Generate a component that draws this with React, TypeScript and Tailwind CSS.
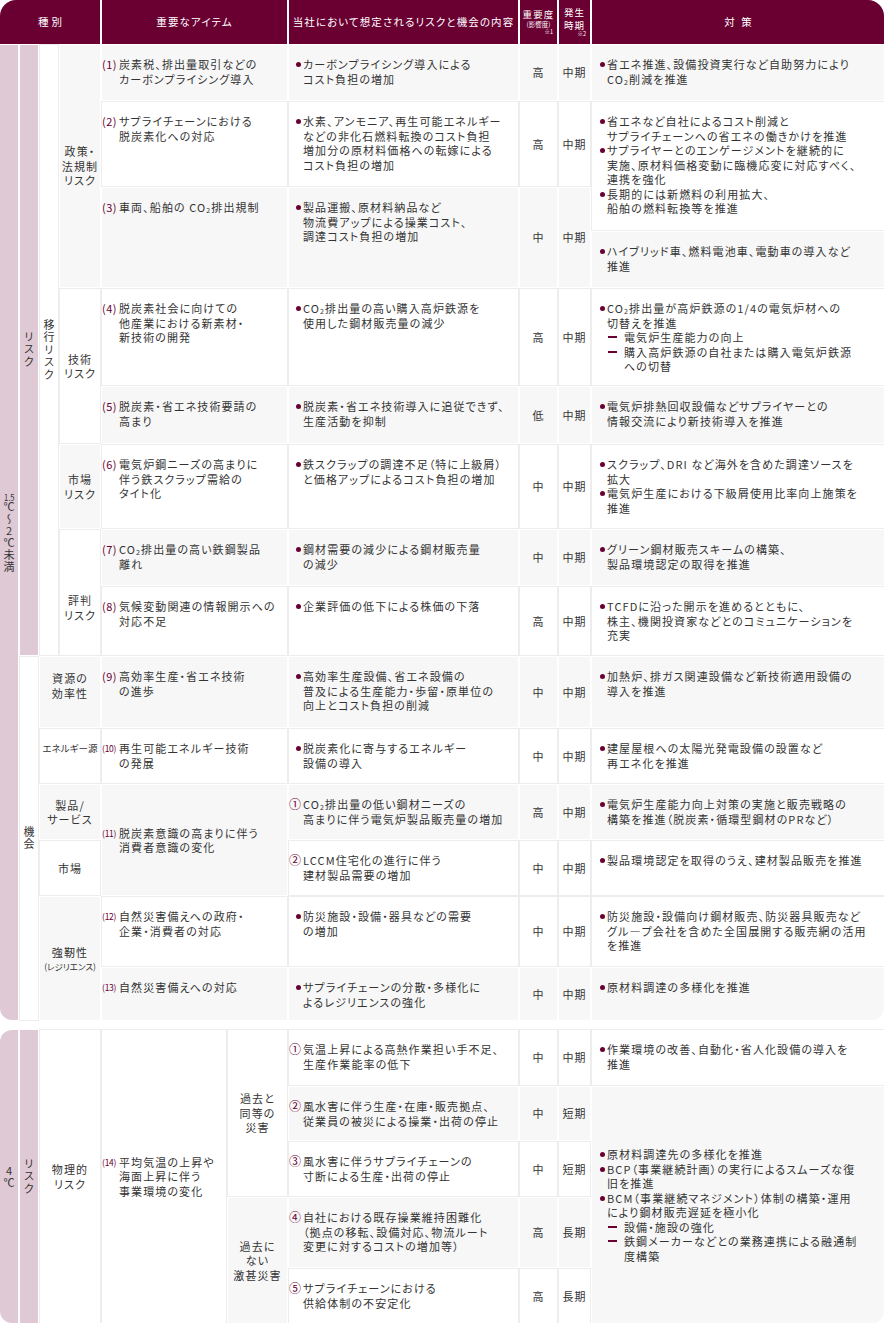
import React from 'react';
import clsx from 'clsx';

type Tone = 'gray' | 'white' | 'pink';

// grid placement classes, written out so Tailwind can see them
const CS = ['', 'col-start-1', 'col-start-2', 'col-start-3', 'col-start-4', 'col-start-5', 'col-start-6', 'col-start-7', 'col-start-8', 'col-start-9'];
const CE = ['', 'col-end-1', 'col-end-2', 'col-end-3', 'col-end-4', 'col-end-5', 'col-end-6', 'col-end-7', 'col-end-8', 'col-end-9', 'col-end-10'];
const RS = ['', 'row-start-1', 'row-start-2', 'row-start-3', 'row-start-4', 'row-start-5', 'row-start-6', 'row-start-7', 'row-start-8', 'row-start-9', 'row-start-10', 'row-start-11', 'row-start-12', 'row-start-13', 'row-start-14', 'row-start-15'];
const RE = ['', 'row-end-1', 'row-end-2', 'row-end-3', 'row-end-4', 'row-end-5', 'row-end-6', 'row-end-7', 'row-end-8', 'row-end-9', 'row-end-10', 'row-end-11', 'row-end-12', 'row-end-13', 'row-end-14', 'row-end-15', 'row-end-16'];

const TONE: Record<Tone, string> = {
  gray: 'bg-[#f7f7f7]',
  white: 'bg-white shadow-[0_0_0_1px_#ededed]',
  pink: 'bg-[#dfc9d4]',
};

interface CellProps {
  c: number;
  cs?: number;
  r: number;
  rs?: number;
  tone: Tone;
  mid?: boolean;
  center?: boolean;
  className?: string;
  children?: React.ReactNode;
}

function Cell({ c, cs = 1, r, rs = 1, tone, mid, center, className, children }: CellProps) {
  return (
    <div
      className={clsx(
        'flex flex-col',
        CS[c],
        CE[c + cs],
        RS[r],
        RE[r + rs],
        TONE[tone],
        mid ? 'justify-center' : 'pt-[12px]',
        center && 'items-center text-center',
        className
      )}
    >
      {children}
    </div>
  );
}

const L = ({ children }: { children: React.ReactNode }) => (
  <span className="block whitespace-nowrap">{children}</span>
);

const CO2 = () => (
  <>
    CO<span className="align-[-1px] text-[7px] leading-none">2</span>
  </>
);

function Item({ n, children }: { n: number; children: React.ReactNode }) {
  return (
    <div className="flex">
      {n >= 10 ? (
        <span className="w-[17px] shrink-0 pt-[1px] text-[8.5px] leading-[13px] tracking-[-0.03em] text-[#6a0032]">({n})</span>
      ) : (
        <span className="w-[17px] shrink-0 tracking-[0.04em] text-[#6a0032]">({n})</span>
      )}
      <div>{children}</div>
    </div>
  );
}

function Dot({ children }: { children: React.ReactNode }) {
  return (
    <div className="flex">
      <span className="mr-[2px] mt-[5px] h-[5px] w-[5px] shrink-0 rounded-full bg-[#6a0032]" />
      <div>{children}</div>
    </div>
  );
}

function Dash({ children }: { children: React.ReactNode }) {
  return (
    <div className="flex">
      <span className="ml-[1px] mr-[7px] mt-[6px] h-[2px] w-[9px] shrink-0 bg-[#6a0032]" />
      <div>{children}</div>
    </div>
  );
}

const CIRC = ['', '①', '②', '③', '④', '⑤'];

function Circ({ n, children }: { n: number; children: React.ReactNode }) {
  return (
    <div className="flex">
      <span className="w-[14px] shrink-0 text-[12px] tracking-normal text-[#6a0032]">{CIRC[n]}</span>
      <div>{children}</div>
    </div>
  );
}

// stacked vertical label, one text run set in vertical writing mode
function Vert({ text }: { text: string }) {
  return (
    <div className="leading-[18px] tracking-[1.5px] [font-feature-settings:normal] [text-orientation:upright] [writing-mode:vertical-rl]">
      {text}
    </div>
  );
}

interface Row {
  r: number;
  rs?: number;
  tone: Tone;
  circ?: boolean;
  body: React.ReactNode;
  imp: string;
  term: string;
}

const rows1: Row[] = [
  { r: 1, tone: 'gray', imp: '高', term: '中期', body: <Dot><L>カーボンプライシング導入による</L><L>コスト負担の増加</L></Dot> },
  { r: 2, tone: 'white', imp: '高', term: '中期', body: <Dot><L>水素、アンモニア、再生可能エネルギー</L><L>などの非化石燃料転換のコスト負担</L><L>増加分の原材料価格への転嫁による</L><L>コスト負担の増加</L></Dot> },
  { r: 3, rs: 2, tone: 'gray', imp: '中', term: '中期', body: <Dot><L>製品運搬、原材料納品など</L><L>物流費アップによる操業コスト、</L><L>調達コスト負担の増加</L></Dot> },
  { r: 5, tone: 'white', imp: '高', term: '中期', body: <Dot><L><CO2 />排出量の高い購入高炉鉄源を</L><L>使用した鋼材販売量の減少</L></Dot> },
  { r: 6, tone: 'gray', imp: '低', term: '中期', body: <Dot><L>脱炭素・省エネ技術導入に追従できず、</L><L>生産活動を抑制</L></Dot> },
  { r: 7, tone: 'white', imp: '中', term: '中期', body: <Dot><L>鉄スクラップの調達不足（特に上級屑）</L><L>と価格アップによるコスト負担の増加</L></Dot> },
  { r: 8, tone: 'gray', imp: '中', term: '中期', body: <Dot><L>鋼材需要の減少による鋼材販売量</L><L>の減少</L></Dot> },
  { r: 9, tone: 'white', imp: '高', term: '中期', body: <Dot><L>企業評価の低下による株価の下落</L></Dot> },
  { r: 10, tone: 'gray', imp: '中', term: '中期', body: <Dot><L>高効率生産設備、省エネ設備の</L><L>普及による生産能力・歩留・原単位の</L><L>向上とコスト負担の削減</L></Dot> },
  { r: 11, tone: 'white', imp: '中', term: '中期', body: <Dot><L>脱炭素化に寄与するエネルギー</L><L>設備の導入</L></Dot> },
  { r: 12, tone: 'gray', circ: true, imp: '高', term: '中期', body: <Circ n={1}><L><CO2 />排出量の低い鋼材ニーズの</L><L>高まりに伴う電気炉製品販売量の増加</L></Circ> },
  { r: 13, tone: 'white', circ: true, imp: '中', term: '中期', body: <Circ n={2}><L>LCCM住宅化の進行に伴う</L><L>建材製品需要の増加</L></Circ> },
  { r: 14, tone: 'white', imp: '中', term: '中期', body: <Dot><L>防災施設・設備・器具などの需要</L><L>の増加</L></Dot> },
  { r: 15, tone: 'gray', imp: '中', term: '中期', body: <Dot><L>サプライチェーンの分散・多様化に</L><L>よるレジリエンスの強化</L></Dot> },
];

const rows2: Row[] = [
  { r: 1, tone: 'white', circ: true, imp: '中', term: '中期', body: <Circ n={1}><L>気温上昇による高熱作業担い手不足、</L><L>生産作業能率の低下</L></Circ> },
  { r: 2, tone: 'gray', circ: true, imp: '中', term: '短期', body: <Circ n={2}><L>風水害に伴う生産・在庫・販売拠点、</L><L>従業員の被災による操業・出荷の停止</L></Circ> },
  { r: 3, tone: 'white', circ: true, imp: '中', term: '短期', body: <Circ n={3}><L>風水害に伴うサプライチェーンの</L><L>寸断による生産・出荷の停止</L></Circ> },
  { r: 4, tone: 'gray', circ: true, imp: '高', term: '長期', body: <Circ n={4}><L>自社における既存操業維持困難化</L><L>（拠点の移転、設備対応、物流ルート</L><L>変更に対するコストの増加等）</L></Circ> },
  { r: 5, tone: 'white', circ: true, imp: '高', term: '長期', body: <Circ n={5}><L>サプライチェーンにおける</L><L>供給体制の不安定化</L></Circ> },
];

function RowCells({ row }: { row: Row }) {
  const rs = row.rs ?? 1;
  return (
    <>
      <Cell c={6} r={row.r} rs={rs} tone={row.tone} className={row.circ ? 'pl-0' : 'pl-[7px]'}>
        {row.body}
      </Cell>
      <Cell c={7} r={row.r} rs={rs} tone={row.tone} mid center>
        {row.imp}
      </Cell>
      <Cell c={8} r={row.r} rs={rs} tone={row.tone} mid center>
        {row.term}
      </Cell>
    </>
  );
}

function Header() {
  return (
    <div className="grid h-[44px] grid-cols-[100px_185px_229px_37px_31px_1fr] gap-x-[2px] text-[10.5px] text-white">
      <div className="flex items-center justify-center rounded-tl-[16px] bg-[#6a0032] pl-[0.3em] tracking-[0.3em]">種別</div>
      <div className="flex items-center justify-center bg-[#6a0032]">重要なアイテム</div>
      <div className="flex items-center justify-center bg-[#6a0032]">当社において想定されるリスクと機会の内容</div>
      <div className="flex flex-col items-stretch justify-center bg-[#6a0032] text-center tracking-normal">
        <span className="block text-[9.5px] leading-[12px] tracking-[0.12em]">重要度</span>
        <span className="block text-[6.5px] leading-[8.5px] [font-feature-settings:normal]">(影響度)</span>
        <span className="block pr-[4px] text-right text-[5.5px] leading-[7px]">※1</span>
      </div>
      <div className="flex flex-col items-stretch justify-center bg-[#6a0032] text-center tracking-[0.1em]">
        <span className="block text-[9.5px] leading-[12.5px]">発生</span>
        <span className="block text-[9.5px] leading-[12.5px]">時期</span>
        <span className="block pr-[4px] text-right text-[5.5px] leading-[7px] tracking-normal">※2</span>
      </div>
      <div className="flex items-center justify-center rounded-tr-[16px] bg-[#6a0032] pl-[0.6em] tracking-[0.6em]">対策</div>
    </div>
  );
}

function Section1() {
  return (
    <div className="mt-px flex">
      <div className="flex w-[18px] shrink-0 flex-col items-center justify-center rounded-bl-[12px] bg-[#dfc9d4]">
        <div className="leading-[18px] tracking-[1px] [font-feature-settings:normal] [text-orientation:upright] [writing-mode:vertical-rl]">
          <span className="text-[9.5px] tracking-normal [text-combine-upright:all]">1.5</span>℃〜2℃未満
        </div>
      </div>
      <div className="ml-[2px] grid flex-1 grid-cols-[18px_18px_40px_124px_59px_229px_37px_31px_1fr] grid-rows-[55px_84px_42px_55px_96px_56px_83px_55px_68px_70px_54px_54px_54px_69px_52px] gap-[2px]">
        {/* left labels */}
        <Cell c={1} r={1} rs={9} tone="pink" mid center><Vert text="リスク" /></Cell>
        <Cell c={1} r={10} rs={6} tone="white" mid center><Vert text="機会" /></Cell>
        <Cell c={2} r={1} rs={9} tone="white" mid center><Vert text="移行リスク" /></Cell>
        <Cell c={3} r={1} rs={4} tone="gray" mid center><L>政策・</L><L>法規制</L><L>リスク</L></Cell>
        <Cell c={3} r={5} rs={2} tone="white" mid center><L>技術</L><L>リスク</L></Cell>
        <Cell c={3} r={7} tone="gray" mid center><L>市場</L><L>リスク</L></Cell>
        <Cell c={3} r={8} rs={2} tone="white" mid center className="pt-[30px]"><L>評判</L><L>リスク</L></Cell>
        <Cell c={2} cs={2} r={10} tone="gray" center className="!pt-[14px]"><L>資源の</L><L>効率性</L></Cell>
        <Cell c={2} cs={2} r={11} tone="white" center><span className="block whitespace-nowrap text-[9.5px] tracking-normal">エネルギー源</span></Cell>
        <Cell c={2} cs={2} r={12} tone="gray" mid center><L>製品/</L><L>サービス</L></Cell>
        <Cell c={2} cs={2} r={13} tone="white" mid center><L>市場</L></Cell>
        <Cell c={2} cs={2} r={14} rs={2} tone="gray" mid center>
          <L>強靭性</L>
          <span className="block whitespace-nowrap text-[8.5px] leading-[12px] tracking-normal">(レジリエンス)</span>
        </Cell>

        {/* items */}
        <Cell c={4} cs={2} r={1} tone="gray"><Item n={1}><L>炭素税、排出量取引などの</L><L>カーボンプライシング導入</L></Item></Cell>
        <Cell c={4} cs={2} r={2} tone="white"><Item n={2}><L>サプライチェーンにおける</L><L>脱炭素化への対応</L></Item></Cell>
        <Cell c={4} cs={2} r={3} rs={2} tone="gray"><Item n={3}><L>車両、船舶の <CO2 />排出規制</L></Item></Cell>
        <Cell c={4} cs={2} r={5} tone="white"><Item n={4}><L>脱炭素社会に向けての</L><L>他産業における新素材・</L><L>新技術の開発</L></Item></Cell>
        <Cell c={4} cs={2} r={6} tone="gray"><Item n={5}><L>脱炭素・省エネ技術要請の</L><L>高まり</L></Item></Cell>
        <Cell c={4} cs={2} r={7} tone="white"><Item n={6}><L>電気炉鋼ニーズの高まりに</L><L>伴う鉄スクラップ需給の</L><L>タイト化</L></Item></Cell>
        <Cell c={4} cs={2} r={8} tone="gray"><Item n={7}><L><CO2 />排出量の高い鉄鋼製品</L><L>離れ</L></Item></Cell>
        <Cell c={4} cs={2} r={9} tone="white"><Item n={8}><L>気候変動関連の情報開示への</L><L>対応不足</L></Item></Cell>
        <Cell c={4} cs={2} r={10} tone="gray"><Item n={9}><L>高効率生産・省エネ技術</L><L>の進歩</L></Item></Cell>
        <Cell c={4} cs={2} r={11} tone="white"><Item n={10}><L>再生可能エネルギー技術</L><L>の発展</L></Item></Cell>
        <Cell c={4} cs={2} r={12} rs={2} tone="gray" mid><Item n={11}><L>脱炭素意識の高まりに伴う</L><L>消費者意識の変化</L></Item></Cell>
        <Cell c={4} cs={2} r={14} tone="white"><Item n={12}><L>自然災害備えへの政府・</L><L>企業・消費者の対応</L></Item></Cell>
        <Cell c={4} cs={2} r={15} tone="gray"><Item n={13}><L>自然災害備えへの対応</L></Item></Cell>

        {rows1.map((row) => (
          <RowCells key={row.r} row={row} />
        ))}

        {/* measures */}
        <Cell c={9} r={1} tone="gray" className="pl-[8px]"><Dot><L>省エネ推進、設備投資実行など自助努力により</L><L><CO2 />削減を推進</L></Dot></Cell>
        <Cell c={9} r={2} rs={2} tone="white" className="pl-[8px]">
          <Dot><L>省エネなど自社によるコスト削減と</L><L>サプライチェーンへの省エネの働きかけを推進</L></Dot>
          <Dot><L>サプライヤーとのエンゲージメントを継続的に</L><L>実施、原材料価格変動に臨機応変に対応すべく、</L><L>連携を強化</L></Dot>
          <Dot><L>長期的には新燃料の利用拡大、</L><L>船舶の燃料転換等を推進</L></Dot>
        </Cell>
        <Cell c={9} r={4} tone="gray" className="pl-[8px]"><Dot><L>ハイブリッド車、燃料電池車、電動車の導入など</L><L>推進</L></Dot></Cell>
        <Cell c={9} r={5} tone="white" className="pl-[8px]">
          <Dot>
            <L><CO2 />排出量が高炉鉄源の1/4の電気炉材への</L>
            <L>切替えを推進</L>
            <Dash><L>電気炉生産能力の向上</L></Dash>
            <Dash><L>購入高炉鉄源の自社または購入電気炉鉄源</L><L>への切替</L></Dash>
          </Dot>
        </Cell>
        <Cell c={9} r={6} tone="gray" className="pl-[8px]"><Dot><L>電気炉排熱回収設備などサプライヤーとの</L><L>情報交流により新技術導入を推進</L></Dot></Cell>
        <Cell c={9} r={7} tone="white" className="pl-[8px]">
          <Dot><L>スクラップ、DRI など海外を含めた調達ソースを</L><L>拡大</L></Dot>
          <Dot><L>電気炉生産における下級屑使用比率向上施策を</L><L>推進</L></Dot>
        </Cell>
        <Cell c={9} r={8} tone="gray" className="pl-[8px]"><Dot><L>グリーン鋼材販売スキームの構築、</L><L>製品環境認定の取得を推進</L></Dot></Cell>
        <Cell c={9} r={9} tone="white" className="pl-[8px]"><Dot><L>TCFDに沿った開示を進めるとともに、</L><L>株主、機関投資家などとのコミュニケーションを</L><L>充実</L></Dot></Cell>
        <Cell c={9} r={10} tone="gray" className="pl-[8px]"><Dot><L>加熱炉、排ガス関連設備など新技術適用設備の</L><L>導入を推進</L></Dot></Cell>
        <Cell c={9} r={11} tone="white" className="pl-[8px]"><Dot><L>建屋屋根への太陽光発電設備の設置など</L><L>再エネ化を推進</L></Dot></Cell>
        <Cell c={9} r={12} tone="gray" className="pl-[8px]"><Dot><L>電気炉生産能力向上対策の実施と販売戦略の</L><L>構築を推進（脱炭素・循環型鋼材のPRなど）</L></Dot></Cell>
        <Cell c={9} r={13} tone="white" className="pl-[8px]"><Dot><L>製品環境認定を取得のうえ、建材製品販売を推進</L></Dot></Cell>
        <Cell c={9} r={14} tone="white" className="pl-[8px]"><Dot><L>防災施設・設備向け鋼材販売、防災器具販売など</L><L>グル―プ会社を含めた全国展開する販売網の活用</L><L>を推進</L></Dot></Cell>
        <Cell c={9} r={15} tone="gray" className="rounded-br-[12px] pl-[8px]"><Dot><L>原材料調達の多様化を推進</L></Dot></Cell>
      </div>
    </div>
  );
}

function Section2() {
  return (
    <div className="mt-[10px] flex">
      <div className="flex w-[18px] shrink-0 flex-col items-center justify-center rounded-l-[12px] bg-[#dfc9d4]">
        <div className="leading-[18px] tracking-[1px] [font-feature-settings:normal] [text-orientation:upright] [writing-mode:vertical-rl]">4℃</div>
      </div>
      <div className="ml-[2px] grid flex-1 grid-cols-[18px_18px_40px_124px_59px_229px_37px_31px_1fr] grid-rows-[55px_53px_54px_69px_54px] gap-[2px]">
        <Cell c={1} r={1} rs={5} tone="pink" mid center><Vert text="リスク" /></Cell>
        <Cell c={2} cs={2} r={1} rs={5} tone="white" mid center><L>物理的</L><L>リスク</L></Cell>
        <Cell c={4} r={1} rs={5} tone="white" mid>
          <Item n={14}><L>平均気温の上昇や</L><L>海面上昇に伴う</L><L>事業環境の変化</L></Item>
        </Cell>
        <Cell c={5} r={1} rs={3} tone="white" mid center><L>過去と</L><L>同等の</L><L>災害</L></Cell>
        <Cell c={5} r={4} rs={2} tone="gray" mid center><L>過去に</L><L>ない</L><L>激甚災害</L></Cell>

        {rows2.map((row) => (
          <RowCells key={row.r} row={row} />
        ))}

        <Cell c={9} r={1} tone="white" className="pl-[8px]"><Dot><L>作業環境の改善、自動化・省人化設備の導入を</L><L>推進</L></Dot></Cell>
        <Cell c={9} r={2} rs={4} tone="gray" mid className="rounded-br-[12px] pl-[8px]">
          <Dot><L>原材料調達先の多様化を推進</L></Dot>
          <Dot><L>BCP（事業継続計画）の実行によるスムーズな復</L><L>旧を推進</L></Dot>
          <Dot>
            <L>BCM（事業継続マネジメント）体制の構築・運用</L>
            <L>により鋼材販売遅延を極小化</L>
            <Dash><L>設備・施設の強化</L></Dash>
            <Dash><L>鉄鋼メーカーなどとの業務連携による融通制</L><L>度構築</L></Dash>
          </Dot>
        </Cell>
      </div>
    </div>
  );
}

export default function App() {
  return (
    <div className="w-[884px] overflow-hidden bg-white font-['Noto_Sans_CJK_JP',sans-serif] text-[11px] leading-[14.5px] tracking-[0.1em] text-[#333] [font-feature-settings:'palt']">
      <Header />
      <Section1 />
      <Section2 />
    </div>
  );
}
